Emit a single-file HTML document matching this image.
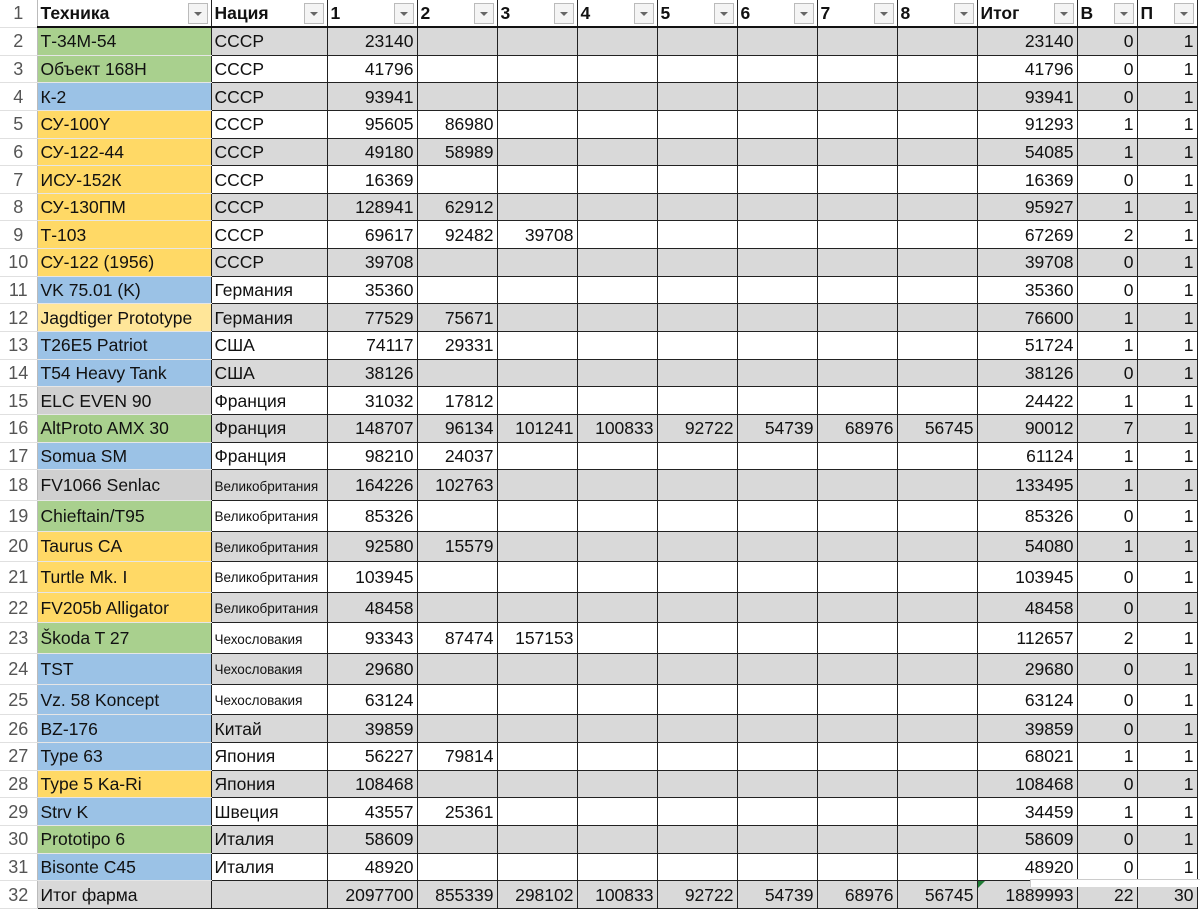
<!DOCTYPE html>
<html><head><meta charset="utf-8"><style>
body{margin:0;background:#fff;width:1200px;height:886px;overflow:hidden;font-family:"Liberation Sans","DejaVu Sans",sans-serif;}
table{border-collapse:collapse;table-layout:fixed;position:absolute;left:0;top:0;}
td{padding:0 3px;font-size:17.5px;color:#111;border:1px solid #222;white-space:nowrap;overflow:hidden;height:26.65px;line-height:26px;text-align:right;}
td.rh{text-align:center;color:#555;border:none;border-right:1px solid #bbb;border-bottom:1px solid #e0e0e0;background:#fff;padding:0;font-size:18px;}
td.n{text-align:left;border-color:#e6e6e6;border-right:1px solid #222;}
td.t{text-align:left;}
td.s{font-size:13.5px;text-align:left;padding-top:3px;}
tr.h td{font-weight:bold;text-align:left;border:none;border-right:1px solid #222;border-bottom:2px solid #111;position:relative;height:26px;}
tr.h td.rh{font-weight:normal;text-align:center;border-right:1px solid #bbb;border-bottom:1px solid #e0e0e0;}
.dd{position:absolute;right:3px;top:3px;width:18px;height:19px;border:1px solid #bbb;background:#f4f4f4;}
.dd:after{content:"";position:absolute;left:5px;top:8px;border-left:4px solid transparent;border-right:4px solid transparent;border-top:4px solid #666;}
tr.g td{background:#d9d9d9;}
tr.g td.rh{background:#fff;}
td.G{background:#a9d08e!important}td.B{background:#9bc2e6!important}td.Y{background:#ffd966!important}td.L{background:#ffe699!important}td.A{background:#d0d0d0!important}
td.c8{border-left:1px dashed #999;}
</style></head><body>
<table>
<colgroup><col style="width:37px"><col style="width:174px"><col style="width:116px"><col style="width:90px"><col style="width:80px"><col style="width:80px"><col style="width:80px"><col style="width:80px"><col style="width:80px"><col style="width:80px"><col style="width:80px"><col style="width:100px"><col style="width:60px"><col style="width:60px"></colgroup>
<tr class="h"><td class="rh">1</td><td>Техника<span class="dd"></span></td><td>Нация<span class="dd"></span></td><td>1<span class="dd"></span></td><td>2<span class="dd"></span></td><td>3<span class="dd"></span></td><td>4<span class="dd"></span></td><td>5<span class="dd"></span></td><td>6<span class="dd"></span></td><td>7<span class="dd"></span></td><td class="c8">8<span class="dd"></span></td><td>Итог<span class="dd"></span></td><td>В<span class="dd"></span></td><td>П<span class="dd"></span></td></tr>
<tr class="g"><td class="rh">2</td><td class="n G">Т-34М-54</td><td class="t">СССР</td><td>23140</td><td></td><td></td><td></td><td></td><td></td><td></td><td class="c8"></td><td>23140</td><td>0</td><td>1</td></tr>
<tr><td class="rh">3</td><td class="n G">Объект 168Н</td><td class="t">СССР</td><td>41796</td><td></td><td></td><td></td><td></td><td></td><td></td><td class="c8"></td><td>41796</td><td>0</td><td>1</td></tr>
<tr class="g"><td class="rh">4</td><td class="n B">К-2</td><td class="t">СССР</td><td>93941</td><td></td><td></td><td></td><td></td><td></td><td></td><td class="c8"></td><td>93941</td><td>0</td><td>1</td></tr>
<tr><td class="rh">5</td><td class="n Y">СУ-100Y</td><td class="t">СССР</td><td>95605</td><td>86980</td><td></td><td></td><td></td><td></td><td></td><td class="c8"></td><td>91293</td><td>1</td><td>1</td></tr>
<tr class="g"><td class="rh">6</td><td class="n Y">СУ-122-44</td><td class="t">СССР</td><td>49180</td><td>58989</td><td></td><td></td><td></td><td></td><td></td><td class="c8"></td><td>54085</td><td>1</td><td>1</td></tr>
<tr><td class="rh">7</td><td class="n Y">ИСУ-152К</td><td class="t">СССР</td><td>16369</td><td></td><td></td><td></td><td></td><td></td><td></td><td class="c8"></td><td>16369</td><td>0</td><td>1</td></tr>
<tr class="g"><td class="rh">8</td><td class="n Y">СУ-130ПМ</td><td class="t">СССР</td><td>128941</td><td>62912</td><td></td><td></td><td></td><td></td><td></td><td class="c8"></td><td>95927</td><td>1</td><td>1</td></tr>
<tr><td class="rh">9</td><td class="n Y">Т-103</td><td class="t">СССР</td><td>69617</td><td>92482</td><td>39708</td><td></td><td></td><td></td><td></td><td class="c8"></td><td>67269</td><td>2</td><td>1</td></tr>
<tr class="g"><td class="rh">10</td><td class="n Y">СУ-122 (1956)</td><td class="t">СССР</td><td>39708</td><td></td><td></td><td></td><td></td><td></td><td></td><td class="c8"></td><td>39708</td><td>0</td><td>1</td></tr>
<tr><td class="rh">11</td><td class="n B">VK 75.01 (K)</td><td class="t">Германия</td><td>35360</td><td></td><td></td><td></td><td></td><td></td><td></td><td class="c8"></td><td>35360</td><td>0</td><td>1</td></tr>
<tr class="g"><td class="rh">12</td><td class="n L">Jagdtiger Prototype</td><td class="t">Германия</td><td>77529</td><td>75671</td><td></td><td></td><td></td><td></td><td></td><td class="c8"></td><td>76600</td><td>1</td><td>1</td></tr>
<tr><td class="rh">13</td><td class="n B">T26E5 Patriot</td><td class="t">США</td><td>74117</td><td>29331</td><td></td><td></td><td></td><td></td><td></td><td class="c8"></td><td>51724</td><td>1</td><td>1</td></tr>
<tr class="g"><td class="rh">14</td><td class="n B">T54 Heavy Tank</td><td class="t">США</td><td>38126</td><td></td><td></td><td></td><td></td><td></td><td></td><td class="c8"></td><td>38126</td><td>0</td><td>1</td></tr>
<tr><td class="rh">15</td><td class="n A">ELC EVEN 90</td><td class="t">Франция</td><td>31032</td><td>17812</td><td></td><td></td><td></td><td></td><td></td><td class="c8"></td><td>24422</td><td>1</td><td>1</td></tr>
<tr class="g"><td class="rh">16</td><td class="n G">AltProto AMX 30</td><td class="t">Франция</td><td>148707</td><td>96134</td><td>101241</td><td>100833</td><td>92722</td><td>54739</td><td>68976</td><td class="c8">56745</td><td>90012</td><td>7</td><td>1</td></tr>
<tr><td class="rh">17</td><td class="n B">Somua SM</td><td class="t">Франция</td><td>98210</td><td>24037</td><td></td><td></td><td></td><td></td><td></td><td class="c8"></td><td>61124</td><td>1</td><td>1</td></tr>
<tr class="g"><td class="rh">18</td><td class="n A">FV1066 Senlac</td><td class="s">Великобритания</td><td>164226</td><td>102763</td><td></td><td></td><td></td><td></td><td></td><td class="c8"></td><td>133495</td><td>1</td><td>1</td></tr>
<tr><td class="rh">19</td><td class="n G">Chieftain/T95</td><td class="s">Великобритания</td><td>85326</td><td></td><td></td><td></td><td></td><td></td><td></td><td class="c8"></td><td>85326</td><td>0</td><td>1</td></tr>
<tr class="g"><td class="rh">20</td><td class="n Y">Taurus CA</td><td class="s">Великобритания</td><td>92580</td><td>15579</td><td></td><td></td><td></td><td></td><td></td><td class="c8"></td><td>54080</td><td>1</td><td>1</td></tr>
<tr><td class="rh">21</td><td class="n Y">Turtle Mk. I</td><td class="s">Великобритания</td><td>103945</td><td></td><td></td><td></td><td></td><td></td><td></td><td class="c8"></td><td>103945</td><td>0</td><td>1</td></tr>
<tr class="g"><td class="rh">22</td><td class="n Y">FV205b Alligator</td><td class="s">Великобритания</td><td>48458</td><td></td><td></td><td></td><td></td><td></td><td></td><td class="c8"></td><td>48458</td><td>0</td><td>1</td></tr>
<tr><td class="rh">23</td><td class="n G">Škoda T 27</td><td class="s">Чехословакия</td><td>93343</td><td>87474</td><td>157153</td><td></td><td></td><td></td><td></td><td class="c8"></td><td>112657</td><td>2</td><td>1</td></tr>
<tr class="g"><td class="rh">24</td><td class="n B">TST</td><td class="s">Чехословакия</td><td>29680</td><td></td><td></td><td></td><td></td><td></td><td></td><td class="c8"></td><td>29680</td><td>0</td><td>1</td></tr>
<tr><td class="rh">25</td><td class="n B">Vz. 58 Koncept</td><td class="s">Чехословакия</td><td>63124</td><td></td><td></td><td></td><td></td><td></td><td></td><td class="c8"></td><td>63124</td><td>0</td><td>1</td></tr>
<tr class="g"><td class="rh">26</td><td class="n B">BZ-176</td><td class="t">Китай</td><td>39859</td><td></td><td></td><td></td><td></td><td></td><td></td><td class="c8"></td><td>39859</td><td>0</td><td>1</td></tr>
<tr><td class="rh">27</td><td class="n B">Type 63</td><td class="t">Япония</td><td>56227</td><td>79814</td><td></td><td></td><td></td><td></td><td></td><td class="c8"></td><td>68021</td><td>1</td><td>1</td></tr>
<tr class="g"><td class="rh">28</td><td class="n Y">Type 5 Ka-Ri</td><td class="t">Япония</td><td>108468</td><td></td><td></td><td></td><td></td><td></td><td></td><td class="c8"></td><td>108468</td><td>0</td><td>1</td></tr>
<tr><td class="rh">29</td><td class="n B">Strv K</td><td class="t">Швеция</td><td>43557</td><td>25361</td><td></td><td></td><td></td><td></td><td></td><td class="c8"></td><td>34459</td><td>1</td><td>1</td></tr>
<tr class="g"><td class="rh">30</td><td class="n G">Prototipo 6</td><td class="t">Италия</td><td>58609</td><td></td><td></td><td></td><td></td><td></td><td></td><td class="c8"></td><td>58609</td><td>0</td><td>1</td></tr>
<tr><td class="rh">31</td><td class="n B">Bisonte C45</td><td class="t">Италия</td><td>48920</td><td></td><td></td><td></td><td></td><td></td><td></td><td class="c8"></td><td>48920</td><td>0</td><td>1</td></tr>
<tr class="g"><td class="rh">32</td><td class="t">Итог фарма</td><td></td><td>2097700</td><td>855339</td><td>298102</td><td>100833</td><td>92722</td><td>54739</td><td>68976</td><td class="c8">56745</td><td style="position:relative">1889993<span style="position:absolute;left:0;top:0;border-top:7px solid #1e7b34;border-right:7px solid transparent"></span></td><td>22</td><td>30</td></tr>
</table>
<div style="position:absolute;left:1030px;top:879px;width:170px;height:7px;background:#fff;border:1px solid #ccc;border-bottom:none"></div>
</body></html>
